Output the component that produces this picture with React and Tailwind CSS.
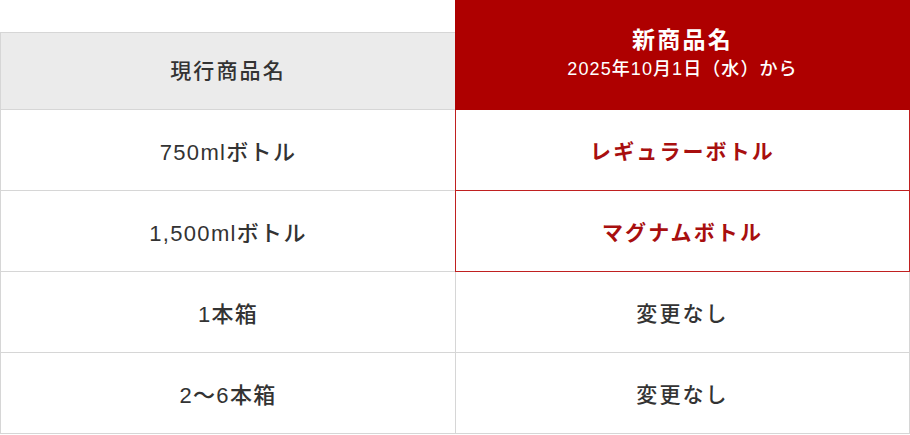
export default function App() {
  const rows = [
    { left: "750mlボトル", right: "レギュラーボトル", red: true },
    { left: "1,500mlボトル", right: "マグナムボトル", red: true },
    { left: "1本箱", right: "変更なし", red: false },
    { left: "2〜6本箱", right: "変更なし", red: false },
  ];
  return (
    <div
      className="w-[910px] bg-white text-[#333]"
      style={{ fontFamily: '"Liberation Sans", "Noto Sans CJK JP", sans-serif' }}
    >
      <div className="flex items-end h-[110px]">
        <div className="w-[455px] h-[78px] bg-[#ebebeb] border-l border-t border-b border-[#d6d6d6] flex items-center justify-center text-[21px] font-medium tracking-[0.1em]">
          現行商品名
        </div>
        <div className="w-[455px] h-[110px] bg-[#ae0000] text-white flex flex-col items-center justify-center pb-[2px]">
          <div className="text-[23px] font-bold tracking-[0.1em] leading-[30px]">新商品名</div>
          <div className="text-[18px] font-medium tracking-[0.06em] leading-[28px]">2025年10月1日（水）から</div>
        </div>
      </div>
      {rows.map((r, i) => (
        <div key={i} className="flex h-[81px]">
          <div className="w-[455px] border-l border-b border-[#d6d6d6] flex items-center justify-center text-[22px] font-medium tracking-[0.06em] pt-[4px]">
            {r.left}
          </div>
          {r.red ? (
            <div className="w-[455px] border-x border-b border-x-[#c02020] border-b-[#c02020] flex items-center justify-center text-[21px] font-bold tracking-[0.1em] text-[#a80f0f] pt-[4px]">
              {r.right}
            </div>
          ) : (
            <div className="w-[455px] border-x border-b border-[#d6d6d6] flex items-center justify-center text-[21px] font-medium tracking-[0.1em] pt-[4px]">
              {r.right}
            </div>
          )}
        </div>
      ))}
    </div>
  );
}
